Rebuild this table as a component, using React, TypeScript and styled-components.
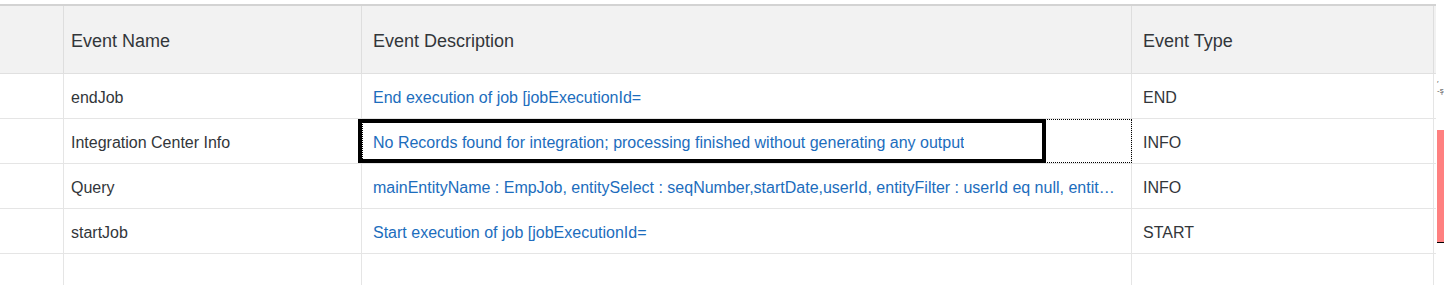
import React from "react";
import styled, { createGlobalStyle } from "styled-components";

const GlobalStyle = createGlobalStyle`
  html, body {
    margin: 0;
    padding: 0;
    background: #ffffff;
    overflow: hidden;
  }
  body {
    font-family: "Liberation Sans", Arial, sans-serif;
  }
`;

type EventRow = {
  name: string;
  description: string;
  type: string;
  focused?: boolean;
};

const rows: EventRow[] = [
  { name: "endJob", description: "End execution of job [jobExecutionId=", type: "END" },
  {
    name: "Integration Center Info",
    description:
      "No Records found for integration; processing finished without generating any output",
    type: "INFO",
    focused: true,
  },
  {
    name: "Query",
    description:
      "mainEntityName : EmpJob, entitySelect : seqNumber,startDate,userId, entityFilter : userId eq null, entityOrderBy : seqNumber asc, startDate asc",
    type: "INFO",
  },
  { name: "startJob", description: "Start execution of job [jobExecutionId=", type: "START" },
  { name: "", description: "", type: "" },
];

const App = () => {
  return (
    <Page>
      <GlobalStyle />
      <Table>
        <HeaderRow>
          <HeaderCell />
          <HeaderCell $pad={7}>Event Name</HeaderCell>
          <HeaderCell $pad={11}>Event Description</HeaderCell>
          <HeaderCell $pad={11}>Event Type</HeaderCell>
          <HeaderCell $last />
        </HeaderRow>
        {rows.map((row, i) => (
          <Row key={i}>
            <Cell />
            <Cell $pad={7}>{row.name}</Cell>
            <Cell $pad={11} $link $focused={row.focused}>
              {row.focused && <FocusFrame />}
              <CellText>{row.description}</CellText>
            </Cell>
            <Cell $pad={11}>{row.type}</Cell>
            <Cell $last />
          </Row>
        ))}
      </Table>
      <SideStrip>
        <Scrap>
          <span>′</span>
          <span>-ş</span>
        </Scrap>
        <RedMarker />
      </SideStrip>
    </Page>
  );
};

const Page = styled.div`
  display: flex;
  align-items: flex-start;
  width: 1444px;
  height: 285px;
  overflow: hidden;
`;

const Table = styled.div`
  width: 1436px;
  flex: none;
  margin-top: 4px;
  border-top: 2px solid #d3d3d3;
`;

const columns = "64px 298px 770px 302px 2px";

const HeaderRow = styled.div`
  display: grid;
  grid-template-columns: ${columns};
  height: 68px;
  background: #f2f2f2;
  border-bottom: 1px solid #e0e0e0;
  box-sizing: border-box;
`;

const HeaderCell = styled.div<{ $pad?: number; $last?: boolean }>`
  display: flex;
  align-items: center;
  box-sizing: border-box;
  padding: 3px 0 0 ${(p) => p.$pad ?? 0}px;
  border-right: ${(p) => (p.$last ? "none" : "1px solid #dedede")};
  color: #32363a;
  font-size: 18px;
  white-space: nowrap;
`;

const Row = styled.div`
  display: grid;
  grid-template-columns: ${columns};
  height: 45px;
  border-bottom: 1px solid #e5e5e5;
  box-sizing: border-box;
`;

const Cell = styled.div<{ $pad?: number; $last?: boolean; $link?: boolean; $focused?: boolean }>`
  position: relative;
  display: flex;
  align-items: center;
  min-width: 0;
  box-sizing: border-box;
  padding: 3px 14px 0 ${(p) => p.$pad ?? 0}px;
  border-right: ${(p) => (p.$last ? "none" : "1px solid #e5e5e5")};
  color: ${(p) => (p.$link ? "#1c6dbd" : "#32363a")};
  font-size: 16px;
  white-space: nowrap;
  outline: ${(p) => (p.$focused ? "1px dotted #000" : "none")};
  outline-offset: -1px;
`;

const CellText = styled.span`
  display: block;
  min-width: 0;
  max-width: 100%;
  overflow: hidden;
  text-overflow: ellipsis;
  white-space: nowrap;
`;

const FocusFrame = styled.div`
  position: absolute;
  left: -4px;
  top: 0;
  width: 688px;
  height: 44px;
  box-sizing: border-box;
  border: 4px solid #000;
  pointer-events: none;
`;

const SideStrip = styled.div`
  display: flex;
  flex-direction: column;
  width: 8px;
  flex: none;
`;

const Scrap = styled.div`
  display: flex;
  flex-direction: column;
  margin: 80px 0 0 1px;
  font-size: 8px;
  line-height: 7px;
  color: #555;
  white-space: nowrap;
`;

const RedMarker = styled.div`
  margin: 36px 0 0 1px;
  width: 7px;
  height: 112px;
  background: #ff8080;
  border-bottom: 1px solid #000;
`;

export default App;
